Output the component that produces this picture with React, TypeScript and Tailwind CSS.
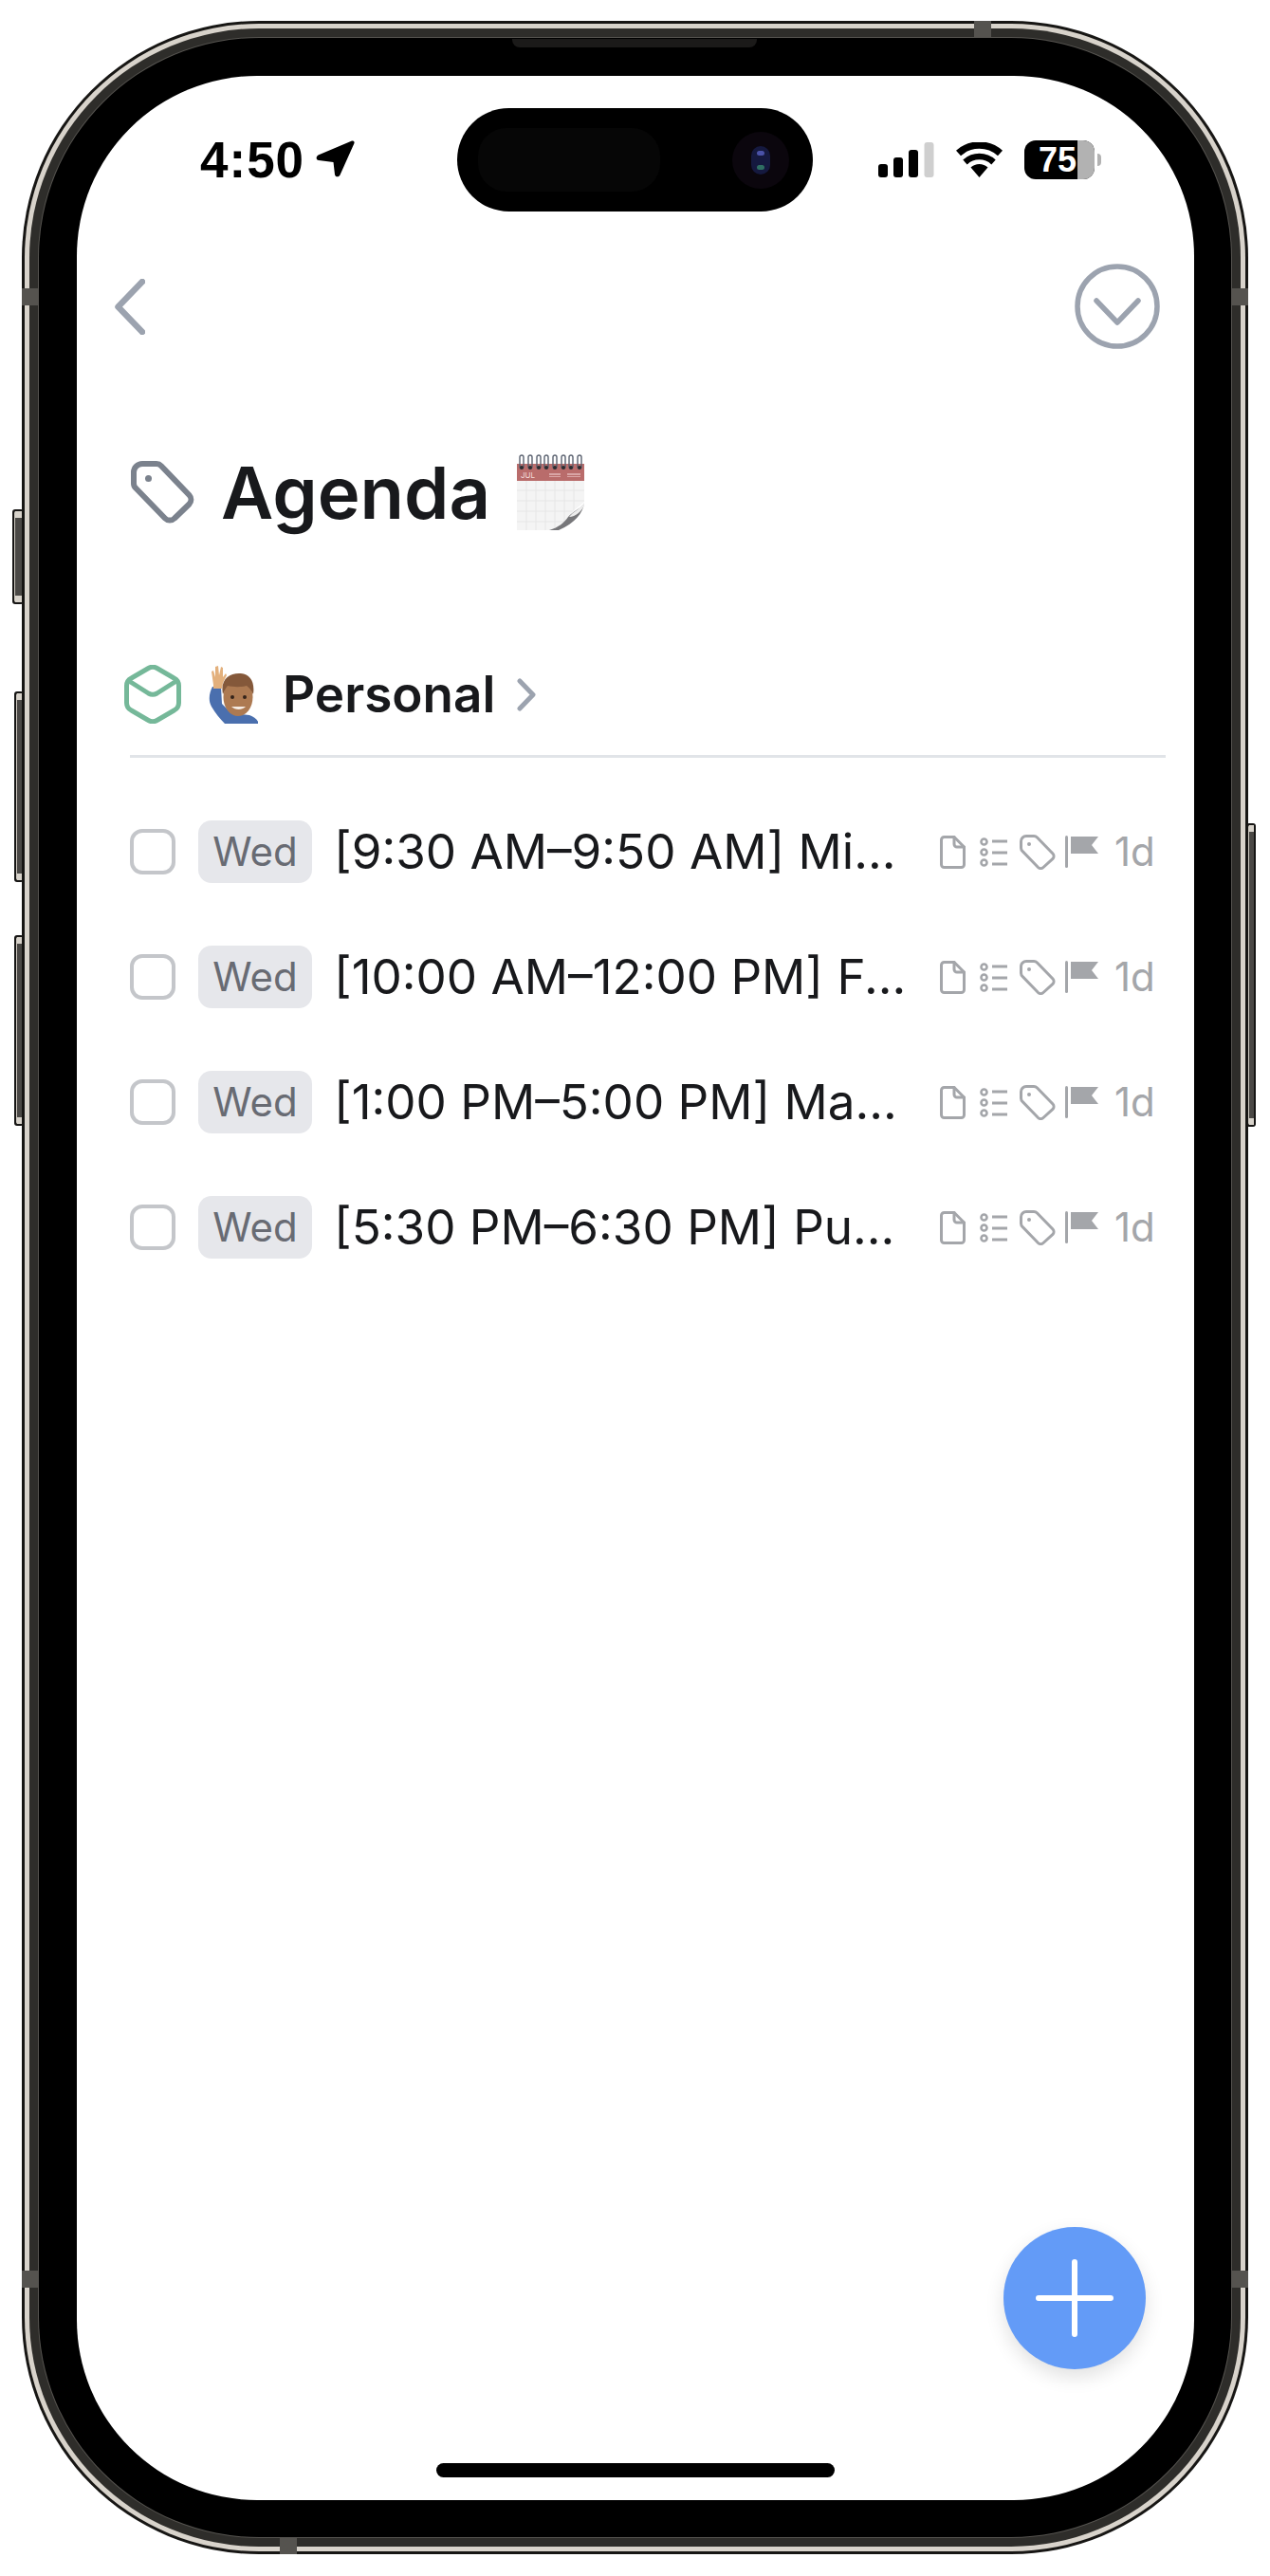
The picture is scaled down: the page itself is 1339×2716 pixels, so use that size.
const rows = [
  "[9:30 AM–9:50 AM] Mi...",
  "[10:00 AM–12:00 PM] F...",
  "[1:00 PM–5:00 PM] Ma...",
  "[5:30 PM–6:30 PM] Pu...",
];

const SideButton = ({ className }: { className: string }) => (
  <div className={`absolute bg-[#161514] rounded-[3px] p-[2px] ${className}`}>
    <div className="h-full w-full rounded-[2px] bg-[#4a4845] border-l border-[#cfcac2] flex flex-col justify-between">
      <div className="h-[7px] bg-[#d8d3cb]" />
      <div className="h-[7px] bg-[#d8d3cb]" />
    </div>
  </div>
);

const Band = ({ className }: { className: string }) => (
  <div className={`absolute bg-[#55534f] ${className}`} />
);

const CalendarEmoji = () => (
  <svg width="71" height="80" viewBox="0 0 71 80" className="shrink-0">
    <rect x="0" y="10" width="71" height="18" fill="#b96c6b" />
    <rect x="0" y="28" width="71" height="52" fill="#f4f4f4" />
    {[38, 49, 60, 71].map((y) => (
      <line key={y} x1="0" x2="71" y1={y} y2={y} stroke="#e6e6e6" strokeWidth="1" />
    ))}
    {[10, 20, 30, 40, 50, 60].map((x) => (
      <line key={x} x1={x} x2={x} y1="28" y2="80" stroke="#e6e6e6" strokeWidth="1" />
    ))}
    <text x="4" y="25" fontSize="8" fill="#f4dcdc" fontFamily="Inter, sans-serif">JUL</text>
    <rect x="34" y="20" width="12" height="2" fill="#d9a5a5" />
    <rect x="34" y="23" width="12" height="1" fill="#d9a5a5" />
    <rect x="53" y="20" width="14" height="2" fill="#d9a5a5" />
    <rect x="53" y="23" width="14" height="1" fill="#d9a5a5" />
    {[5, 14, 23, 31, 40, 49, 57, 66].map((x) => (
      <g key={x}>
        <rect x={x - 2} y="1" width="4" height="14" rx="2" fill="none" stroke="#5b6270" strokeWidth="1.4" />
        <circle cx={x} cy="14" r="2" fill="#2c2c30" />
      </g>
    ))}
    <path d="M71 50 L71 80 L34 80 C46 76 52 70 56 64 C60 58 66 55 71 50 Z" fill="#ffffff" />
    <path d="M71 52 C69 62 62 72 44 80 L34 80 C44 77 50 72 54 66 C59 60 66 58 71 52 Z" fill="#77777a" />
    <path d="M71 51 C66 58 60 60 55 66 C62 66 68 60 71 54 Z" fill="#ececec" />
  </svg>
);

const ManEmoji = () => (
  <svg width="52" height="61" viewBox="0 0 52 61" className="shrink-0">
    <path d="M4 22 C1 28 -1 36 3 43 C7 50 12 56 17 61 L53 61 C52 57 48 54 43 52 L24 50 L14 40 L13 22 Z" fill="#4a6fae" />
    <path d="M5 20 L3 6 L5 5 L7 12 L7 1 L10 0 L11 10 L13 1 L15 2 L15 12 L18 8 L19 10 L15 18 L14 24 L5 24 Z" fill="#e3b07c" />
    <ellipse cx="31" cy="33" rx="15.500" ry="20" fill="#ad7a52" />
    <path d="M15 30 C12 15 21 8 32 8 C43 8 49 16 47 30 C45 26 43 23 40 21 C33 23 24 22 20 21 C18 23 17 26 15 30 Z" fill="#84583a" />
    <circle cx="25" cy="33" r="2" fill="#33231a" />
    <circle cx="38" cy="33" r="2" fill="#33231a" />
    <path d="M24 43 C28 47 35 47 39 43 Z" fill="#f5ece4" />
  </svg>
);

const RowIcons = () => (
  <div className="flex items-center text-[#a4a6aa] shrink-0">
    <svg width="27" height="35" viewBox="0 0 27 35" fill="none" stroke="currentColor" strokeWidth="3" strokeLinejoin="round" strokeLinecap="round">
      <path d="M15 1.5 H4.5 a3 3 0 0 0 -3 3 V30.5 a3 3 0 0 0 3 3 H22.5 a3 3 0 0 0 3 -3 V12 Z" />
      <path d="M15 1.5 V9 a3 3 0 0 0 3 3 H25.5" />
    </svg>
    <svg width="29" height="31" viewBox="0 0 29 31" fill="none" stroke="currentColor" strokeWidth="2.6" className="ml-[15px]">
      <circle cx="4.5" cy="4.5" r="3" />
      <circle cx="4.5" cy="15.5" r="3" />
      <circle cx="4.5" cy="26.5" r="3" />
      <path d="M13 4 H29 M13 16 H29 M13 28 H29" strokeWidth="3" />
    </svg>
    <svg width="38" height="37" viewBox="0 0 38 37" fill="none" stroke="currentColor" strokeWidth="3" className="ml-[13px]">
      <path d="M7 1.5 H15 a5 5 0 0 1 3.500 1.500 L35 20 a4 4 0 0 1 0 5.400 L25 34.500 a4 4 0 0 1 -5.500 0 L3.500 18 a5 5 0 0 1 -2 -4 V7 a5.500 5.500 0 0 1 5.500 -5.500 Z" />
      <circle cx="10" cy="10" r="2" fill="currentColor" stroke="none" />
    </svg>
    <svg width="35" height="34" viewBox="0 0 35 34" fill="currentColor" className="ml-[10px]">
      <rect x="0" y="0" width="3" height="34" rx="1.5" />
      <path d="M6 1 H35 L28 10 L35 19 H6 Z" />
    </svg>
    <span className="ml-[17px] text-[42px] leading-none font-['Inter',sans-serif]">1d</span>
  </div>
);

export default function App() {
  return (
    <div className="relative w-[1339px] h-[2716px] bg-white pl-[23px] pt-[22px] font-['Inter',sans-serif] overflow-hidden">
      <SideButton className="left-[13px] top-[537px] w-[12px] h-[100px]" />
      <SideButton className="left-[15px] top-[729px] w-[10px] h-[201px]" />
      <SideButton className="left-[15px] top-[986px] w-[10px] h-[201px]" />
      <SideButton className="left-[1314px] top-[868px] w-[10px] h-[320px]" />

      {/* phone body */}
      <div className="relative w-[1293px] h-[2671px] rounded-[250px] bg-[#171614] p-[3px]">
        <div className="h-full rounded-[247px] bg-[#d8d3cb] p-[5px]">
          <div className="h-full rounded-[242px] bg-[#2e2d2a] p-[9px]">
            <div className="h-full rounded-[233px] bg-[#55534f] p-[1px]">
              <div className="h-full rounded-[232px] bg-black pl-[40px] pt-[40px] pr-[39px] pb-[39px]">
                <div className="relative h-full rounded-[190px] bg-white overflow-hidden text-[#18191c]">
                  {/* status bar */}
                  <div className="flex items-center pt-[34px]">
                    <div className="w-[401px] h-[109px] pl-[130px] flex items-center">
                      <span className="text-[53px] leading-none font-bold text-black font-['Liberation_Sans',sans-serif] tracking-[1px]">4:50</span>
                      <svg width="41" height="39" viewBox="0 0 41 39" className="ml-[12px] -mt-[2px]">
                        <path d="M38 0.5 C40 0 41 1.5 40.5 3 L25.5 36.5 C24.5 39 20.5 39 20 36 L18.5 23 L3 21 C0 20.5 0 17 2.5 15.5 Z" fill="#000" />
                      </svg>
                    </div>
                    <div className="relative w-[375px] h-[109px] rounded-full bg-black flex items-center">
                      <div className="ml-[22px] w-[192px] h-[67px] rounded-[30px] bg-[#060606]" />
                      <div className="absolute left-[290px] top-[25px] w-[60px] h-[60px] rounded-full bg-[#0b060d] flex items-center justify-center">
                        <div className="relative w-[20px] h-[30px] rounded-full bg-[#15193f]">
                          <div className="absolute left-[6px] top-[5px] w-[8px] h-[5px] rounded-full bg-[#4a52a8]" />
                          <div className="absolute left-[6px] top-[20px] w-[8px] h-[5px] rounded-full bg-[#2f6e62]" />
                        </div>
                      </div>
                    </div>
                    <div className="flex items-center ml-[69px] h-[109px]">
                      <svg width="59" height="37" viewBox="0 0 59 37">
                        <rect x="0" y="23" width="10" height="14" rx="3" fill="#000" />
                        <rect x="16" y="16" width="10" height="21" rx="3" fill="#000" />
                        <rect x="32" y="8" width="10" height="29" rx="3" fill="#000" />
                        <rect x="48.500" y="0" width="10" height="37" rx="3" fill="#cfcfcf" />
                      </svg>
                      <svg width="49" height="37" viewBox="0 0 49 37" className="ml-[23px]">
                        <path d="M24.500 37 L15.500 26.500 A13 13 0 0 1 33.500 26.500 Z" fill="#000" />
                        <path d="M9.500 21 A22 22 0 0 1 39.500 21" fill="none" stroke="#000" strokeWidth="6.500" />
                        <path d="M2.500 11.500 A33 33 0 0 1 46.500 11.500" fill="none" stroke="#000" strokeWidth="7.500" />
                      </svg>
                      <div className="ml-[23px] relative w-[74px] h-[41px] rounded-[12px] overflow-hidden bg-black flex">
                        <span className="w-[56px] pl-[15px] text-white text-[36px] leading-[41px] font-bold font-['Liberation_Sans',sans-serif]">75</span>
                        <div className="w-[18px] bg-[#b2b2b2]" />
                      </div>
                      <div className="ml-[3px] w-[4px] h-[13px] rounded-r-full bg-[#b2b2b2]" />
                    </div>
                  </div>

                  {/* nav */}
                  <div className="flex items-center justify-between mt-[55px] pl-[40px] pr-[36px] h-[90px]">
                    <svg width="32" height="59" viewBox="0 0 32 59" fill="none" stroke="#9ca3af" strokeWidth="6.500" strokeLinecap="round" strokeLinejoin="round">
                      <path d="M29 3 L3.500 29.500 L29 56" />
                    </svg>
                    <svg width="90" height="90" viewBox="0 0 90 90" fill="none" stroke="#9ca3af" strokeWidth="5.500" strokeLinecap="round" strokeLinejoin="round">
                      <circle cx="45" cy="45" r="42" />
                      <path d="M23 39 L45 62 L67 39" />
                    </svg>
                  </div>

                  {/* title */}
                  <div className="flex items-center mt-[111px] pl-[57px] h-[80px]">
                    <svg width="67" height="66" viewBox="0 0 67 66" fill="none" stroke="#7b828d" strokeWidth="6" className="shrink-0">
                      <path d="M12 3 H27 a7 7 0 0 1 5 2.200 L61.500 36 a7 7 0 0 1 0 9.500 L46 60.500 a7 7 0 0 1 -10 0 L5.500 29 a7 7 0 0 1 -2.500 -5.500 V12 a9 9 0 0 1 9 -9 Z" strokeLinejoin="round" />
                      <circle cx="18.500" cy="18.500" r="3.500" fill="#7b828d" stroke="none" />
                    </svg>
                    <h1 className="ml-[28px] text-[76px] leading-none font-semibold">Agenda</h1>
                    <div className="ml-[28px]">
                      <CalendarEmoji />
                    </div>
                  </div>

                  {/* project */}
                  <div className="flex items-center mt-[141px] pl-[50px] h-[64px]">
                    <svg width="60" height="62" viewBox="0 0 60 62" fill="none" stroke="#75b899" strokeWidth="5" strokeLinejoin="round" strokeLinecap="round" className="shrink-0">
                      <path d="M25.500 3.500 a9 9 0 0 1 9 0 L52.500 14 a9 9 0 0 1 5 8 V40 a9 9 0 0 1 -5 8 L34.500 58.500 a9 9 0 0 1 -9 0 L7.500 48 a9 9 0 0 1 -5 -8 V22 a9 9 0 0 1 5 -8 Z" />
                      <path d="M5 17 L25.500 30 a9 9 0 0 0 9 0 L55 17" />
                    </svg>
                    <div className="ml-[29px]">
                      <ManEmoji />
                    </div>
                    <span className="ml-[26px] text-[53px] leading-none font-semibold">Personal</span>
                    <svg width="20" height="35" viewBox="0 0 20 35" fill="none" stroke="#9ca3af" strokeWidth="5" strokeLinecap="round" strokeLinejoin="round" className="ml-[23px]">
                      <path d="M3 3 L17 17.500 L3 32" />
                    </svg>
                  </div>
                  <div className="mt-[32px] ml-[56px] mr-[30px] h-[3px] bg-[#e1e4e8]" />

                  {/* rows */}
                  <div className="mt-[33px] flex flex-col">
                    {rows.map((text) => (
                      <div key={text} className="flex items-center h-[132px] pl-[56px]">
                        <div className="w-[48px] h-[48px] rounded-[13px] border-[4px] border-[#c4c6ca] shrink-0" />
                        <div className="ml-[24px] w-[120px] h-[66px] rounded-[14px] bg-[#e6e7eb] text-[#686b73] text-[42px] leading-[66px] text-center shrink-0">Wed</div>
                        <div className="ml-[23px] w-[639px] shrink-0 text-[51.2px] leading-none whitespace-nowrap">{text}</div>
                        <RowIcons />
                      </div>
                    ))}
                  </div>

                  {/* fab + home bar */}
                  <div className="absolute left-[977px] top-[2268px] w-[150px] h-[150px] rounded-full bg-[#639bf7] shadow-[0_8px_20px_rgba(0,0,0,0.12)] flex items-center justify-center">
                    <svg width="82" height="82" viewBox="0 0 82 82" stroke="#fff" strokeWidth="6" strokeLinecap="round">
                      <path d="M41 3 V79 M3 41 H79" />
                    </svg>
                  </div>
                  <div className="absolute left-[379px] top-[2517px] w-[420px] h-[15px] rounded-full bg-black" />
                </div>
              </div>
            </div>
          </div>
        </div>

        {/* speaker + antenna bands */}
        <div className="absolute left-[517px] top-[19px] w-[258px] h-[9px] rounded-b-[8px] bg-[#1b1a19]" />
        <Band className="left-[1004px] top-[0px] w-[18px] h-[18px]" />
        <Band className="left-[0px] top-[282px] w-[18px] h-[18px]" />
        <Band className="right-[0px] top-[282px] w-[18px] h-[18px]" />
        <Band className="left-[0px] top-[2372px] w-[18px] h-[18px]" />
        <Band className="right-[0px] top-[2372px] w-[18px] h-[18px]" />
        <Band className="left-[272px] bottom-[0px] w-[18px] h-[18px]" />
      </div>
    </div>
  );
}
